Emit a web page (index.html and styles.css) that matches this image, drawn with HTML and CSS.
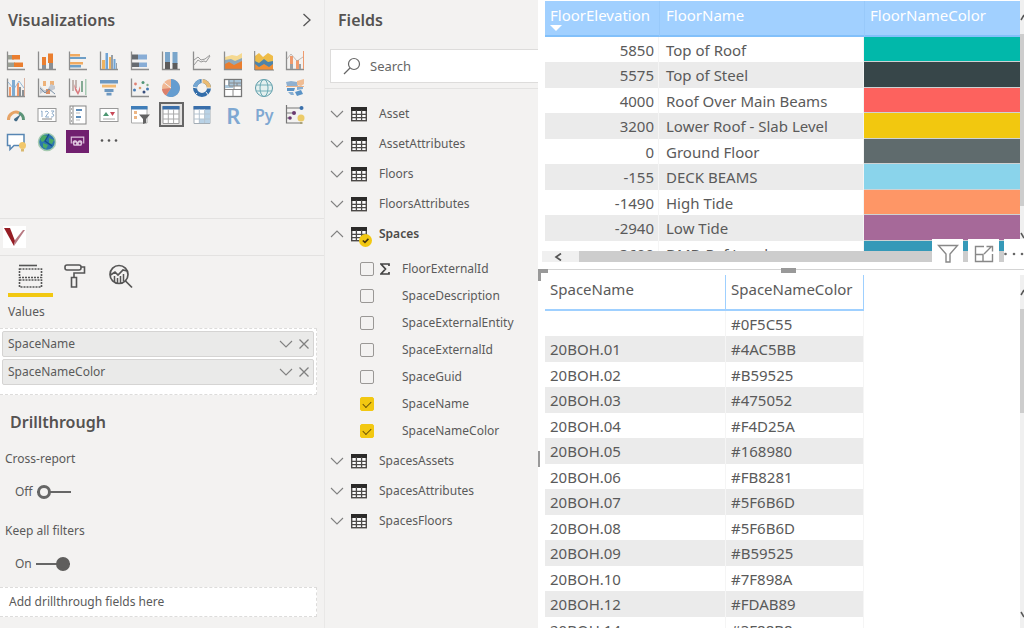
FILE: index.html
```html
<!DOCTYPE html>
<html lang="en">
<head>
<meta charset="utf-8">
<title>Report editor</title>
<link rel="stylesheet" href="styles.css">
</head>
<body>
<svg class="defs" aria-hidden="true">
  <symbol id="axes" viewBox="0 0 20 20"><path d="M1.5 0.5V18.5H19" fill="none" stroke="#8d8d8d" stroke-width="1.3"/></symbol>
  <symbol id="table" viewBox="0 0 16 16"><rect x="0.7" y="1.7" width="14.6" height="13" fill="#fff" stroke="#4c4a48" stroke-width="1.4"/><path d="M0 1H16V5H0Z" fill="#2b2a29"/><path d="M0 8.4H16M0 11.6H16M5.4 4V15M10.6 4V15" stroke="#4c4a48" stroke-width="1.3"/></symbol>
  <symbol id="down" viewBox="0 0 14 14"><path d="M1 4L7 10L13 4" fill="none" stroke="currentColor" stroke-width="1.1"/></symbol>
  <symbol id="up" viewBox="0 0 14 14"><path d="M1 10L7 4L13 10" fill="none" stroke="currentColor" stroke-width="1.1"/></symbol>
  <symbol id="close" viewBox="0 0 14 14"><path d="M2.5 2.5L11.5 11.5M11.5 2.5L2.5 11.5" fill="none" stroke="currentColor" stroke-width="1.3"/></symbol>
</svg>
<main class="app">
  <section class="pane viz">
    <header class="pane-head">
      <h2 class="title">Visualizations</h2>
      <button class="plain" aria-label="Collapse pane"><svg width="10" height="14" viewBox="0 0 10 14"><path d="M1.5 1L8 7L1.5 13" fill="none" stroke="#555" stroke-width="1.3"/></svg></button>
    </header>
    <div class="gallery">
      <button class="plain" aria-label="Stacked bar chart"><svg class="ico" viewBox="0 0 20 20"><use href="#axes"/><path d="M2 4H8V8.500H2ZM2 11.500H9V16H2Z" fill="#9a9f94"/><path d="M6 4H14V8.500H6ZM8 11.500H17V16H8Z" fill="#ea7e2f"/></svg></button>
      <button class="plain" aria-label="Stacked column chart"><svg class="ico" viewBox="0 0 20 20"><use href="#axes"/><path d="M5 12H9V18H5ZM12 10H16V18H12Z" fill="#8a8f94"/><path d="M5 6H9V14H5ZM11 2.500H16V12H11Z" fill="#ea7e2f"/></svg></button>
      <button class="plain" aria-label="Clustered bar chart"><svg class="ico" viewBox="0 0 20 20"><use href="#axes"/><path d="M2 3H12V5.500H2ZM2 11H15V13.500H2Z" fill="#f0aa60"/><path d="M2 6H18V8H2ZM2 14H13V16.500H2Z" fill="#6e9fc7"/></svg></button>
      <button class="plain" aria-label="Clustered column chart"><svg class="ico" viewBox="0 0 20 20"><use href="#axes"/><path d="M3 9H6V18H3ZM10 6H12V18H10Z" fill="#eeb35f"/><path d="M6.500 2H9V18H6.500ZM14.500 8H16.500V18H14.500Z" fill="#6fa4d6"/><path d="M12 4H14V18H12ZM17 12H18V18H17Z" fill="#979fa7"/></svg></button>
      <button class="plain" aria-label="100% stacked bar chart"><svg class="ico" viewBox="0 0 20 20"><use href="#axes"/><path d="M2 3.500H8V8.500H2ZM2 11.500H9V16H2Z" fill="#666b70"/><path d="M8 3.500H17V8.500H8ZM9 11.500H17V16H9Z" fill="#88add6"/></svg></button>
      <button class="plain" aria-label="100% stacked column chart"><svg class="ico" viewBox="0 0 20 20"><use href="#axes"/><path d="M4 1H9V11H4ZM11.500 1H16.500V13H11.500Z" fill="#7aa6cb"/><path d="M4 11H9V18H4ZM11.500 12H16.500V18H11.500Z" fill="#5c5c5c"/></svg></button>
      <button class="plain" aria-label="Line chart"><svg class="ico" viewBox="0 0 20 20"><use href="#axes"/><path d="M2 9L6 6L9 9L13 8L18 4M2 14L6 9L9 11L12 10L14 11L18 5" fill="none" stroke="#999" stroke-width="1"/></svg></button>
      <button class="plain" aria-label="Area chart"><svg class="ico" viewBox="0 0 20 20"><path d="M2 6L9 4L14 5L19 2V12H2Z" fill="#f5d991"/><path d="M2 9L8 8L12 10L19 7V14H2Z" fill="#8fa8ba"/><path d="M2 13L6 11L11 14L19 10V18H2Z" fill="#ea7e2f"/><use href="#axes"/></svg></button>
      <button class="plain" aria-label="Stacked area chart"><svg class="ico" viewBox="0 0 20 20"><path d="M1 5L5 2L9 6L14 2L19 5V14H1Z" fill="#eebc48"/><path d="M1 10L5 12L10 8L14 11L19 10V17H1Z" fill="#4d84aa"/><path d="M1 13L5 16L10 13L15 16L19 13V19H1Z" fill="#ef8f35"/><path d="M0.7 0V19H20" fill="none" stroke="#7d7d7d"/></svg></button>
      <button class="plain" aria-label="Line and stacked column chart"><svg class="ico" viewBox="0 0 20 20"><use href="#axes"/><path d="M5 5H8V18H5ZM11 9H14V18H11Z" fill="#ef9a6d"/><path d="M5 13H8V18H5ZM14 13H16V18H14Z" fill="#9aa0a4"/><path d="M18.500 0V18" stroke="#ef9a6d"/><path d="M2 8L6 3L12 10L18 6" fill="none" stroke="#b3a9a4" stroke-width=".8"/></svg></button>

      <button class="plain" aria-label="Line and clustered column chart"><svg class="ico" viewBox="0 0 20 20"><use href="#axes"/><path d="M3 9H5V18H3ZM11 5H13V18H11Z" fill="#ef9a6d"/><path d="M6 2H9V18H6Z" fill="#7eabd1"/><path d="M13 9H15V18H13ZM16 12H18V18H16Z" fill="#8a9094"/><path d="M18.500 0V18" stroke="#d3a08a" stroke-width=".8"/><path d="M2 4L8 11L13 3L18 10" fill="none" stroke="#7eabd1" stroke-width=".8"/></svg></button>
      <button class="plain" aria-label="Ribbon chart"><svg class="ico" viewBox="0 0 20 20"><use href="#axes"/><path d="M6 3H9V8H6ZM13 3H17V7H13Z" fill="#edb27a"/><path d="M3 8L7 12H10L14 6L18 8V11L14 13L10 16L6 14L3 16Z" fill="#c3c9d2"/><path d="M9 11H13V16H9Z" fill="#d88f67"/><path d="M3 10L8 15L12 11L18 16" fill="none" stroke="#7d93a8"/></svg></button>
      <button class="plain" aria-label="Waterfall chart"><svg class="ico" viewBox="0 0 20 20"><use href="#axes"/><path d="M5 2V13M8 2V10" stroke="#a58d86" stroke-width="1.2"/><path d="M6 6L10 14L12 8V13L10 17L7 12Z" fill="#d97a7e"/><path d="M13 3H15V14H13Z" fill="#84ab94"/><path d="M17 1H18.500V17H17Z" fill="#a8c9b4"/></svg></button>
      <button class="plain" aria-label="Funnel"><svg class="ico" viewBox="0 0 20 20"><path d="M1 2H19V5.500H1ZM5.500 11H14.500V14H5.500ZM7.500 14.800H12.500V17.500H7.500Z" fill="#6d98c1"/><path d="M3 6.700H17V9.500H3Z" fill="#f2ba72"/></svg></button>
      <button class="plain" aria-label="Scatter chart"><svg class="ico" viewBox="0 0 20 20"><use href="#axes"/><g fill="#467cb4"><circle cx="4.500" cy="12" r="1.500"/><circle cx="17.500" cy="11" r="1.500"/></g><circle cx="5.500" cy="6" r="1.400" fill="#e08173"/><circle cx="13" cy="4.500" r="1.500" fill="#509677"/><circle cx="10" cy="10" r="1.300" fill="#d9a06c"/><circle cx="14" cy="14" r="1.500" fill="#374d7b"/><circle cx="17.500" cy="7" r="1.200" fill="#7eaf87"/></svg></button>
      <button class="plain" aria-label="Pie chart"><svg class="ico" viewBox="0 0 20 20"><circle cx="10" cy="10" r="9" fill="#f0b793"/><path d="M10 10V1A9 9 0 1 1 5 17.500Z" fill="#659dd0"/><path d="M10 10L1 11A9 9 0 0 0 5 17.500Z" fill="#dc806c"/><path d="M10 10L3 4.500" stroke="#f3f2f1"/></svg></button>
      <button class="plain" aria-label="Donut chart"><svg class="ico" viewBox="0 0 20 20"><g fill="none" stroke-width="4"><circle cx="10" cy="10" r="7" stroke="#336eaa"/><path d="M10 3A7 7 0 0 1 17 10" stroke="#eabb73"/><path d="M3 10A7 7 0 0 1 8.500 3.200" stroke="#75a7d2"/></g><path d="M10 0V5M0 9L5 10M15 10H20M5 15L2 18M14 14L17 18" stroke="#f3f2f1"/></svg></button>
      <button class="plain" aria-label="Treemap"><svg class="ico" viewBox="0 0 20 20"><rect x="1.500" y="1.500" width="17" height="17" fill="#fff" stroke="#777" stroke-width="1.300"/><path d="M5 2H18V8H10V10H2V7H5Z" fill="#aac6da"/><path d="M2 11.500H18M10 12V18M6 2V8H18M11 2V11M6 5H18M14 5V8" fill="none" stroke="#888"/></svg></button>
      <button class="plain" aria-label="Map"><svg class="ico" viewBox="0 0 20 20"><circle cx="10" cy="10" r="8.500" fill="#e4f0ef" stroke="#5c9aa8"/><ellipse cx="10" cy="10" rx="4" ry="8.500" fill="none" stroke="#68a7b2"/><path d="M2 7H18M2 13H18" stroke="#68a7b2" stroke-width=".9"/></svg></button>
      <button class="plain" aria-label="Filled map"><svg class="ico" viewBox="0 0 20 20"><path d="M1 4L6 3L12 4L13 8H2Z" fill="#8fb0d0"/><path d="M12 3L19 1V6L16 8L12 7Z" fill="#f0bd94"/><path d="M2 10L10 10L9 13H2ZM10 14L16 12L18 16L12 18Z" fill="#5a93c6"/><path d="M12 9H18V11L12 12ZM3 14L8 14L9 17H6Z" fill="#88afd2"/><path d="M1 8.500H19" stroke="#e9b38a"/></svg></button>

      <button class="plain" aria-label="Gauge"><svg class="ico" viewBox="0 0 20 20"><path d="M2.500 15A7.500 7.500 0 0 1 13 7.800" fill="none" stroke="#e6a467" stroke-width="3"/><path d="M13 7.800A7.500 7.500 0 0 1 17.500 15" fill="none" stroke="#5c9578" stroke-width="3"/><path d="M8 14L15 9L11 16A2 2 0 0 1 8 14Z" fill="#426b87"/></svg></button>
      <button class="plain" aria-label="Card"><svg class="ico" viewBox="0 0 20 20"><rect x="1" y="3.500" width="18" height="13" fill="#fff" stroke="#999"/><path d="M4 6.500L5 6V12M8 7L10 6L11.500 7.500L8.500 12H12M14 6H17L15 8.500L17 10L15.500 12H14" fill="none" stroke="#8eacca"/><path d="M5 14H15" stroke="#888"/></svg></button>
      <button class="plain" aria-label="Multi-row card"><svg class="ico" viewBox="0 0 20 20"><rect x="2" y="1" width="16" height="18" fill="#fff" stroke="#858585"/><path d="M5 1V19" stroke="#888"/><path d="M8 5H14M8 12H13" stroke="#5c8cba" stroke-width="2"/><path d="M8 8H12M8 15H12" stroke="#bbb"/><path d="M3 4H4M3 8H4M3 12H4M3 16H4" stroke="#666"/></svg></button>
      <button class="plain" aria-label="KPI"><svg class="ico" viewBox="0 0 20 20"><rect x="1" y="3.500" width="18" height="13" fill="#fff" stroke="#999"/><path d="M4 11L7 7L10 11Z" fill="#4b9671"/><path d="M11 7H16L13.500 11Z" fill="#c84858"/><path d="M4 14H16" stroke="#aaa"/></svg></button>
      <button class="plain" aria-label="Slicer"><svg class="ico" viewBox="0 0 20 20"><path d="M1.500 1.500H17V18H1.500Z" fill="#fff" stroke="#aaa"/><path d="M1 1H17.500V4.500H1Z" fill="#3f7db8"/><path d="M4 6H7V9H4ZM4 11H7V14H4Z" fill="#edb684"/><path d="M9 9.500H20L16 14V18L13 19V14Z" fill="#626262"/></svg></button>
      <button class="plain selected" aria-label="Table" aria-pressed="true"><svg class="ico" viewBox="0 0 20 20"><path d="M2 1.500H18V18.500H2Z" fill="#fff" stroke="#999"/><path d="M1.500 1H18.500V4.500H1.500Z" fill="#396eaa"/><path d="M2 9H18M2 14H18M7.300 4V18M12.600 4V18" stroke="#aaa"/></svg></button>
      <button class="plain" aria-label="Matrix"><svg class="ico" viewBox="0 0 20 20"><path d="M2 1.500H18V18.500H2Z" fill="#fff" stroke="#a3adb5"/><path d="M13 4H18V18H7V14H13Z" fill="#b9d2e6"/><path d="M1.500 1H18.500V4.500H1.500Z" fill="#396eaa"/><path d="M2 9H18M2 14H18M7.300 4V18M12.600 4V18" stroke="#b5c4d0"/></svg></button>
      <button class="plain letter big" aria-label="R script visual">R</button>
      <button class="plain letter" aria-label="Python visual">Py</button>
      <button class="plain" aria-label="Key influencers"><svg class="ico" viewBox="0 0 20 20"><path d="M1.500 0V18H15M2 3H16M2 8H8M2 13H5" fill="none" stroke="#777" stroke-width="1.200"/><circle cx="16.500" cy="3" r="2" fill="#3a70ab"/><circle cx="9" cy="8" r="2" fill="#6b3a71"/><circle cx="5" cy="13" r="1.800" fill="#6b3a71"/><circle cx="16" cy="13" r="3.500" fill="#eccb68"/><path d="M15 17H17.500V19H15Z" fill="#aaa27c"/></svg></button>

      <button class="plain" aria-label="Q&amp;A"><svg class="ico" viewBox="0 0 20 20"><path d="M1.500 2.500H18V13.500H8L4 17.500V13.500H1.500Z" fill="#fff" stroke="#5786b3" stroke-width="1.500"/><circle cx="16.500" cy="13.500" r="3.500" fill="#f1c76c"/><path d="M15 17H18V19.500H15Z" fill="#d9b96f"/></svg></button>
      <button class="plain" aria-label="ArcGIS Maps"><svg class="ico" viewBox="0 0 20 20"><circle cx="10" cy="10" r="8.500" fill="#2c76ae" stroke="#a6cbb0" stroke-width="1.500"/><path d="M6 3L11 4L9 8L5 10L3 7ZM12 6L17 8L15 12L12 11ZM6 11L11 13L9 17L6 15Z" fill="#4bab65"/><path d="M12 2L8 9L15 14" fill="none" stroke="#154f8c" stroke-width="1.300"/></svg></button>
      <button class="plain" aria-label="Power Apps"><svg class="app-tile" viewBox="0 0 24 24"><path d="M0 0H24V24H0Z" fill="#71206f"/><path d="M5.500 14V7.500H18.500V14" fill="none" stroke="#dfc5df" stroke-width="1.200"/><path d="M7 14A2.500 2.500 0 0 1 12 12.500A2.500 2.500 0 0 1 17 14L16 16.500H8Z" fill="#dfc5df"/><circle cx="9.700" cy="14" r="1" fill="#71206f"/><circle cx="14.300" cy="14" r="1" fill="#71206f"/></svg></button>
      <button class="plain" aria-label="More visuals"><svg class="ico" viewBox="0 0 20 20"><g fill="#555"><circle cx="3" cy="8.500" r="1.300"/><circle cx="10" cy="8.500" r="1.300"/><circle cx="17" cy="8.500" r="1.300"/></g></svg></button>
    </div>
    <div class="custom">
      <button class="plain" aria-label="Custom visual"><svg width="23" height="22" viewBox="0 0 23 22"><path d="M0 0H23V22H0Z" fill="#fff"/><path d="M1 2H7L12 15L11 20Z" fill="#951d24"/><path d="M11 20L12 14L20 4H22Z" fill="#b77982"/></svg></button>
    </div>
    <nav class="tabs">
      <button class="plain tab active" aria-label="Fields"><svg width="26" height="26" viewBox="0 0 26 26"><path d="M2 2.500H20" stroke="#555" stroke-width="1.600"/><path d="M2.500 6H24.500V14.500H2.500ZM2.500 17H24.500V24H2.500Z" fill="none" stroke="#555" stroke-width="1.600" stroke-dasharray="2 1"/></svg></button>
      <button class="plain tab" aria-label="Format"><svg width="26" height="26" viewBox="0 0 26 26"><g fill="none" stroke="#555" stroke-width="1.600"><rect x="3" y="2" width="16" height="5" rx="2"/><path d="M19 4H22.500V10H12V14.500"/><path d="M9.500 14.500H14.500V24H9.500Z"/></g></svg></button>
      <button class="plain tab" aria-label="Analytics"><svg width="26" height="26" viewBox="0 0 26 26"><g fill="none" stroke="#555" stroke-width="1.700"><circle cx="12" cy="11.500" r="9"/><path d="M18.500 18L25 24.500"/><path d="M3.500 12L8 9L11 12L16 7L20 8"/><path d="M7.500 13V19M10.500 15V20M13.500 13V20M16.500 11V18" stroke-width="1.500"/></g></svg></button>
    </nav>
    <h3 class="label values">Values</h3>
    <div class="well">
      <div class="chip"><span class="name">SpaceName</span><button class="plain" aria-label="SpaceName options"><svg class="sm"><use href="#down"/></svg></button><button class="plain" aria-label="Remove SpaceName"><svg class="sm"><use href="#close"/></svg></button></div>
      <div class="chip"><span class="name">SpaceNameColor</span><button class="plain" aria-label="SpaceNameColor options"><svg class="sm"><use href="#down"/></svg></button><button class="plain" aria-label="Remove SpaceNameColor"><svg class="sm"><use href="#close"/></svg></button></div>
    </div>
    <h2 class="title drill">Drillthrough</h2>
    <div class="options">
      <div class="option"><span class="label" id="cross">Cross-report</span>
        <label class="switch"><span>Off</span><input type="checkbox" role="switch" aria-labelledby="cross"></label></div>
      <div class="option"><span class="label" id="keep">Keep all filters</span>
        <label class="switch"><span>On</span><input type="checkbox" role="switch" aria-labelledby="keep" checked></label></div>
    </div>
    <div class="drop">Add drillthrough fields here</div>
  </section>

  <section class="pane fields">
    <header class="pane-head"><h2 class="title">Fields</h2></header>
    <label class="search"><svg width="18" height="18" viewBox="0 0 18 18"><circle cx="11" cy="7" r="5.500" fill="none" stroke="#666" stroke-width="1.200"/><path d="M7 11L1 17" stroke="#666" stroke-width="1.200"/></svg><input type="text" placeholder="Search" aria-label="Search fields"></label>
    <div class="tree">
      <button class="plain node"><svg class="sm"><use href="#down"/></svg><svg class="tbl"><use href="#table"/></svg>Asset</button>
      <button class="plain node"><svg class="sm"><use href="#down"/></svg><svg class="tbl"><use href="#table"/></svg>AssetAttributes</button>
      <button class="plain node"><svg class="sm"><use href="#down"/></svg><svg class="tbl"><use href="#table"/></svg>Floors</button>
      <button class="plain node"><svg class="sm"><use href="#down"/></svg><svg class="tbl"><use href="#table"/></svg>FloorsAttributes</button>
      <button class="plain node open" aria-expanded="true"><svg class="sm"><use href="#up"/></svg><span class="marked"><svg class="tbl"><use href="#table"/></svg><svg class="badge" viewBox="0 0 12 12"><circle cx="6" cy="6" r="6" fill="#f2c811"/><path d="M3.500 6L5.500 7.700L8.700 4.500" fill="none" stroke="#463512" stroke-width="1.500"/></svg></span>Spaces</button>
      <div class="leaves">
        <label class="leaf"><input type="checkbox"><svg class="sigma" viewBox="0 0 10 12"><path d="M9 3V1H1L5.500 6L1 11H9V9" fill="none" stroke="#444" stroke-width="1.700"/></svg><span>FloorExternalId</span></label>
        <label class="leaf"><input type="checkbox"><span>SpaceDescription</span></label>
        <label class="leaf"><input type="checkbox"><span>SpaceExternalEntity</span></label>
        <label class="leaf"><input type="checkbox"><span>SpaceExternalId</span></label>
        <label class="leaf"><input type="checkbox"><span>SpaceGuid</span></label>
        <label class="leaf"><input type="checkbox" checked><span>SpaceName</span></label>
        <label class="leaf"><input type="checkbox" checked><span>SpaceNameColor</span></label>
      </div>
      <button class="plain node"><svg class="sm"><use href="#down"/></svg><svg class="tbl"><use href="#table"/></svg>SpacesAssets</button>
      <button class="plain node"><svg class="sm"><use href="#down"/></svg><svg class="tbl"><use href="#table"/></svg>SpacesAttributes</button>
      <button class="plain node"><svg class="sm"><use href="#down"/></svg><svg class="tbl"><use href="#table"/></svg>SpacesFloors</button>
    </div>
  </section>

  <section class="report">
    <article class="visual top">
      <div class="grid-area">
        <table class="grid floors">
          <colgroup><col class="c-elev"><col class="c-floor"><col></colgroup>
          <thead><tr><th aria-sort="descending">FloorElevation<svg class="sort" viewBox="0 0 12 6"><path d="M0 0H12L6 6Z" fill="#fff"/></svg></th><th>FloorName</th><th>FloorNameColor</th></tr></thead>
          <tbody>
            <tr><td>5850</td><td>Top of Roof</td><td class="teal"></td></tr>
            <tr><td>5575</td><td>Top of Steel</td><td class="slate"></td></tr>
            <tr><td>4000</td><td>Roof Over Main Beams</td><td class="coral"></td></tr>
            <tr><td>3200</td><td>Lower Roof - Slab Level</td><td class="yellow"></td></tr>
            <tr><td>0</td><td>Ground Floor</td><td class="gray"></td></tr>
            <tr><td>-155</td><td>DECK BEAMS</td><td class="sky"></td></tr>
            <tr><td>-1490</td><td>High Tide</td><td class="orange"></td></tr>
            <tr><td>-2940</td><td>Low Tide</td><td class="purple"></td></tr>
            <tr><td>-3600</td><td>DMD Ref Level</td><td class="blue"></td></tr>
          </tbody>
        </table>
      </div>
      <div class="vbar"><svg class="arrow" viewBox="0 0 4 8"><path d="M1 7L4 2" stroke="#555" stroke-width="1.500"/></svg><div class="thumb tall"></div><svg class="arrow" viewBox="0 0 4 8"><path d="M1 1L4 6" stroke="#555" stroke-width="1.500"/></svg></div>
      <div class="hbar"><svg width="8" height="8" viewBox="0 0 8 8"><path d="M7 0.500L2 4L7 7.500" fill="none" stroke="#555" stroke-width="1.700"/></svg><div class="hthumb"></div></div>
      <div class="tools">
        <button class="plain tool" aria-label="Filters"><svg width="22" height="20" viewBox="0 0 22 20"><path d="M1.500 1.500H20.500L13 10V18H9V10Z" fill="none" stroke="#888" stroke-width="1.400"/></svg></button>
        <button class="plain tool" aria-label="Focus mode"><svg width="20" height="18" viewBox="0 0 20 18"><path d="M10 1.500H1.500V16.500H18.500V9M1.500 9.500H9V16.500M10 9L17 2M12.500 1.500H18.500V6.500" fill="none" stroke="#888" stroke-width="1.400"/></svg></button>
        <button class="plain tool" aria-label="More options"><svg width="20" height="10" viewBox="0 0 20 10"><g fill="#666"><circle cx="1.500" cy="5" r="1.300"/><circle cx="10" cy="5" r="1.300"/><circle cx="18" cy="5" r="1.300"/></g></svg></button>
      </div>
    </article>
    <article class="visual bottom">
      <i class="h tl"></i><i class="h tc"></i><i class="h ml"></i><i class="h bl"></i><i class="h bc"></i>
      <div class="grid-area">
        <table class="grid spaces">
          <colgroup><col class="c-space"><col class="c-color"></colgroup>
          <thead><tr><th>SpaceName</th><th>SpaceNameColor</th></tr></thead>
          <tbody>
            <tr><td></td><td>#0F5C55</td></tr>
            <tr><td>20BOH.01</td><td>#4AC5BB</td></tr>
            <tr><td>20BOH.02</td><td>#B59525</td></tr>
            <tr><td>20BOH.03</td><td>#475052</td></tr>
            <tr><td>20BOH.04</td><td>#F4D25A</td></tr>
            <tr><td>20BOH.05</td><td>#168980</td></tr>
            <tr><td>20BOH.06</td><td>#FB8281</td></tr>
            <tr><td>20BOH.07</td><td>#5F6B6D</td></tr>
            <tr><td>20BOH.08</td><td>#5F6B6D</td></tr>
            <tr><td>20BOH.09</td><td>#B59525</td></tr>
            <tr><td>20BOH.10</td><td>#7F898A</td></tr>
            <tr><td>20BOH.12</td><td>#FDAB89</td></tr>
            <tr><td>20BOH.14</td><td>#3F88B8</td></tr>
          </tbody>
        </table>
      </div>
      <div class="vbar"><svg class="arrow" viewBox="0 0 4 8"><path d="M1 7L4 2" stroke="#555" stroke-width="1.500"/></svg><div class="thumb short"></div><svg class="arrow" viewBox="0 0 4 8"><path d="M1 1L4 6" stroke="#555" stroke-width="1.500"/></svg></div>
    </article>
  </section>
</main>
</body>
</html>
```
FILE: styles.css
```css
*, *::before { box-sizing: border-box; }
body { margin: 0; font: 13px/18px "Noto Sans", "Open Sans", sans-serif; color: #5a5a5a; background: #f3f2f1; }
h2, h3 { margin: 0; }
svg { display: block; flex: none; }
.defs { display: none; }
.plain { display: flex; align-items: center; justify-content: center; border: 0; margin: 0; padding: 0; background: none; font: inherit; color: inherit; cursor: pointer; }

.app { display: grid; grid-template-columns: 325px 213px minmax(0, 1fr); height: 100vh; overflow: hidden; }
.pane { display: flex; flex-direction: column; min-width: 0; background: #f3f2f1; }
.pane-head { display: flex; align-items: center; justify-content: space-between; height: 40px; padding: 0 12px 0 8px; flex: none; }
.title { font-size: 16px; line-height: 24px; font-weight: 600; color: #555351; }
.label { font-size: 12px; line-height: 18px; font-weight: 400; }

/* Visualizations pane */
.viz { border-right: 1px solid #e9e8e7; }
.gallery { display: grid; grid-template-columns: repeat(10, 1fr); grid-auto-rows: 27px; padding: 7px 13px 0 0; flex: none; }
.gallery .plain { min-width: 0; }
.ico { width: 20px; height: 20px; }
.app-tile { width: 23px; height: 23px; }
.gallery .selected { justify-self: center; align-self: center; width: 25px; height: 25px; border: 2px solid #666; background: #e3e2e1; }
.letter { font-size: 16px; font-weight: 600; color: #7fa8d2; }
.letter.big { font-size: 22px; }
.custom { display: flex; align-items: center; height: 38px; margin-top: 63px; padding-left: 3px; border: solid #e3e2e1; border-width: 1px 0; flex: none; }
.tabs { display: flex; height: 41px; padding-left: 8px; flex: none; }
.tab { width: 45px; padding: 7px 2px 4px 0; border-bottom: 4px solid transparent; }
.tab.active { border-bottom-color: #f2c811; }
.values { padding: 6px 8px 7px; }
.well { display: flex; flex-direction: column; gap: 2px; margin-right: 7px; padding: 2px 2px 9px 2px; background: #fff; border: 1px dashed #dddcdb; border-left: 0; }
.chip { display: flex; align-items: center; gap: 4px; height: 26px; padding: 0 2px 0 5px; border: 1px solid #d5d4d3; border-radius: 2px; background: #eaeae9; font-size: 12px; }
.name { flex: 1; }
.sm { width: 14px; height: 14px; color: #808080; }
.drill { padding: 15px 10px 16px; }
.options { display: flex; flex-direction: column; gap: 21px; padding: 0 5px 14px; }
.option { display: flex; flex-direction: column; gap: 15px; }
.switch { display: flex; align-items: center; gap: 4px; padding-left: 10px; font-size: 12px; }
.switch input { appearance: none; display: flex; align-items: center; width: 34px; height: 14px; margin: 0; background: linear-gradient(#666, #666) center / 100% 2px no-repeat; }
.switch input::before { content: ""; width: 14px; height: 14px; border: 3px solid #666; border-radius: 50%; background: #f3f2f1; }
.switch input:checked { justify-content: flex-end; }
.switch input:checked::before { background: #5f5e5d; border-color: #5f5e5d; }
.drop { margin-right: 7px; padding: 5px 9px; border: 1px dashed #dddcdb; border-left: 0; background: #fff; font-size: 12px; line-height: 18px; }

/* Fields pane */
.fields .pane-head { padding-left: 13px; }
.search { display: flex; align-items: center; gap: 9px; height: 34px; margin: 9px 0 5px 5px; padding-left: 12px; border: 1px solid #dddcdb; border-right: 0; background: #fff; flex: none; }
.search input { flex: 1; min-width: 0; border: 0; outline: 0; padding: 0; background: none; font: inherit; color: #555; }
.search input::placeholder { color: #666; opacity: 1; }
.tree { display: flex; flex-direction: column; padding: 10px 0 0 5px; border-top: 1px solid #e3e2e1; font-size: 12px; }
.node { justify-content: flex-start; height: 30px; gap: 7px; }
.node .tbl { margin-right: 5px; }
.tbl { width: 16px; height: 16px; }
.node.open { font-weight: 600; color: #4c4a48; }
.marked { position: relative; }
.badge { position: absolute; left: 8px; top: 8px; width: 13px; height: 13px; }
.leaves { display: flex; flex-direction: column; padding: 6px 0 2px 30px; }
.leaf { display: flex; align-items: center; height: 27px; gap: 6px; }
.leaf span { margin-left: auto; width: 136px; }
.leaf input { appearance: none; width: 14px; height: 14px; margin: 0; border: 1px solid #9a9896; border-radius: 2px; flex: none; }
.leaf input:checked { border-color: #f2c811; background: #f2c811; display: grid; place-items: center; }
.leaf input:checked::before { content: ""; width: 8px; height: 5px; border: solid #6b5408; border-width: 0 0 1px 1px; rotate: -45deg; }
.sigma { width: 10px; height: 12px; }

/* Report canvas */
.report { display: grid; grid-template-rows: 269px minmax(0, 1fr); background: #fff; min-width: 0; }
.visual { position: relative; display: grid; grid-template-columns: minmax(0, 1fr) 4px; min-height: 0; }
.grid-area { overflow: hidden; padding-left: 7px; min-height: 0; }
.top { grid-template-rows: 251px 11px; }
.top .grid-area { padding-top: 1px; }
.grid { table-layout: fixed; border-collapse: separate; border-spacing: 0; font-size: 15px; line-height: 20px; color: #5a5a5a; }
.floors { width: 100%; }
.spaces { width: 319px; }
.c-elev { width: 114px; }
.c-floor { width: 205px; }
.c-space { width: 181px; }
.c-color { width: 138px; }
.grid th { height: 36px; padding: 4px 5px 0; text-align: left; vertical-align: top; font-weight: 400; border-bottom: 2px solid #9fd0ff; white-space: nowrap; }
.grid td { height: 25px; padding: 0 7px; white-space: nowrap; border-right: 1px solid #f5f5f5; }
.grid tr:nth-child(even) td { height: 26px; background-color: #ebebeb; }
.floors th { background: #a1d0ff; border-bottom-color: #82c0fa; color: #fff; }
.floors th + th { padding-left: 6px; border-left: 1px solid #98c9fa; }
.floors th:last-child { padding-left: 5px; }
.sort { width: 12px; height: 6px; }
.floors td:first-child { text-align: right; padding-right: 4px; }
.floors tr td:last-child { padding: 0; border: solid #cfd2d3; border-width: 0 0 1px; }
.floors tr td.teal { background-color: #01b8aa; }
.floors tr:nth-child(even) td.slate { background-color: #374649; }
.floors tr td.coral { background-color: #fd625e; }
.floors tr:nth-child(even) td.yellow { background-color: #f2c80f; }
.floors tr td.gray { background-color: #5f6b6d; }
.floors tr:nth-child(even) td.sky { background-color: #8ad4eb; }
.floors tr td.orange { background-color: #fe9666; }
.floors tr:nth-child(even) td.purple { background-color: #a66999; }
.floors tr td.blue { background-color: #3599b8; }
.spaces th { border-right: 1px solid #9fd0ff; }
.spaces td:first-child { padding-left: 5px; }
.spaces td:last-child, .spaces th:last-child { padding-left: 5px; }
.vbar { display: flex; flex-direction: column; background: #f0f0f0; padding: 13px 0; min-height: 0; }
.top .vbar { height: 240px; padding-bottom: 0; }
.arrow { width: 4px; height: 8px; }
.thumb { background: #cdcdcd; margin: 13px 0 auto; }
.tall { height: 172px; }
.short { height: 104px; }
.hbar { display: flex; align-items: center; gap: 17px; margin-left: 4px; padding-left: 12px; background: #f0f0f0; grid-column: 1 / -1; }
.hthumb { flex: 1; height: 11px; margin-right: 20px; background: #cdcdcd; }
.tools { position: absolute; right: 0; bottom: 4px; display: flex; gap: 5px; }
.tool { width: 31px; height: 26px; padding-top: 4px; background: #fff; }
.tool:last-child { width: 20px; }
.bottom { grid-template-rows: minmax(0, 1fr); border-top: 1px solid #d4d4d4; }
.bottom .grid-area { padding-top: 5px; margin-bottom: 2px; }
.bottom .vbar { margin: 5px 0 12px; }
.h { position: absolute; background: #999; }
.tl { left: 0; top: -1px; width: 10px; height: 12px; background: none; border: solid #999; border-width: 4px 0 0 3px; }
.tc { left: 50%; top: -2px; width: 15px; height: 5px; }
.ml { left: 0; top: 50%; width: 2px; height: 16px; margin-top: -6px; }
.bl { left: 0; bottom: 0; width: 10px; height: 8px; background: none; border: solid #999; border-width: 0 0 1px 2px; }
.bc { left: 50%; bottom: 0; width: 15px; height: 1px; }
```
